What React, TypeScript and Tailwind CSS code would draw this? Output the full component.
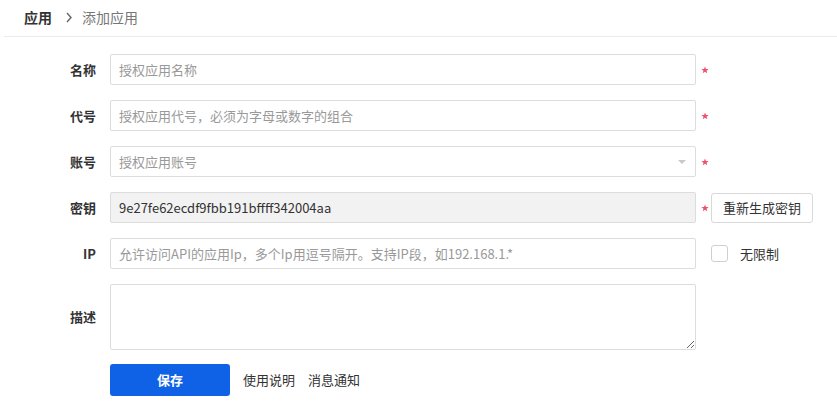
const font = { fontFamily: '"Noto Sans CJK SC", "Noto Sans", sans-serif' };

function Star() {
  return (
    <span className="flex w-[15px] shrink-0 items-center justify-center pl-[2px]">
      <svg className="h-[8px] w-[8px]" viewBox="0 0 10 10" fill="#f0506e">
        <path d="M5 0.5l1.2 3.2 3.4 0.1-2.7 2.1 1 3.3L5 7.3 2.1 9.2l1-3.3L0.4 3.8l3.4-0.1z" />
      </svg>
    </span>
  );
}

function Row({ label, children, height = "h-[31px]" }: { label: string; children: React.ReactNode; height?: string }) {
  return (
    <div className={`flex items-center ${height}`}>
      <label className="w-[96px] shrink-0 text-right text-[13px] font-bold text-[#333]">{label}</label>
      <div className="ml-[14px] flex h-full items-center">{children}</div>
    </div>
  );
}

const inputCls =
  "h-full w-[586px] rounded-[2px] border border-[#dcdcdc] px-[8px] text-[13px] text-[#333] outline-none placeholder:text-[#999]";

export default function App() {
  return (
    <div className="min-h-[412px] w-[837px] bg-white text-[#333]" style={font}>
      {/* breadcrumb */}
      <div className="ml-[4px] flex h-[37px] items-center border-b border-[#ebebeb] pb-[1px] pl-[20px] text-[14px]">
        <span className="font-bold text-[#333]">应用</span>
        <svg className="ml-[13px] mr-[9px] h-[11px] w-[8px]" viewBox="0 0 8 11" fill="none" stroke="#666" strokeWidth={1.4}>
          <path d="M2 1l4 4.5-4 4.5" />
        </svg>
        <span className="text-[#777]">添加应用</span>
      </div>

      <div className="flex flex-col gap-[15px] pt-[17px]">
        <Row label="名称">
          <input className={inputCls} placeholder="授权应用名称" />
          <Star />
        </Row>
        <Row label="代号">
          <input className={inputCls} placeholder="授权应用代号，必须为字母或数字的组合" />
          <Star />
        </Row>
        <Row label="账号">
          <div className={`${inputCls} relative flex items-center text-[#999]`}>
            授权应用账号
            <span className="absolute right-[9px] top-[13px] h-0 w-0 border-x-[4px] border-t-[4px] border-x-transparent border-t-[#c8c8c8]" />
          </div>
          <Star />
        </Row>
        <Row label="密钥">
          <div className={`${inputCls} flex items-center bg-[#f2f2f2] text-[#333]`}>9e27fe62ecdf9fbb191bffff342004aa</div>
          <Star />
          <button className="h-[30px] w-[102px] rounded-[3px] border border-[#d9d9d9] bg-white text-[13px] text-[#333]">
            重新生成密钥
          </button>
        </Row>
        <Row label="IP">
          <input className={inputCls} placeholder="允许访问API的应用Ip，多个Ip用逗号隔开。支持IP段，如192.168.1.*" />
          <label className="ml-[15px] flex items-center text-[13px] text-[#333]">
            <span className="h-[17px] w-[17px] rounded-[3px] border border-[#d0d0d0] bg-white" />
            <span className="ml-[12px]">无限制</span>
          </label>
        </Row>
        <Row label="描述" height="h-[66px]">
          <textarea className={`${inputCls} resize-y py-[6px]`} />
        </Row>
      </div>

      <div className="ml-[110px] mt-[14px] flex items-center text-[13px]">
        <button className="h-[32px] w-[120px] rounded-[3px] bg-[#0f62e6] font-bold text-white">保存</button>
        <span className="ml-[13px] text-[#333]">使用说明</span>
        <span className="ml-[13px] text-[#333]">消息通知</span>
      </div>
    </div>
  );
}
